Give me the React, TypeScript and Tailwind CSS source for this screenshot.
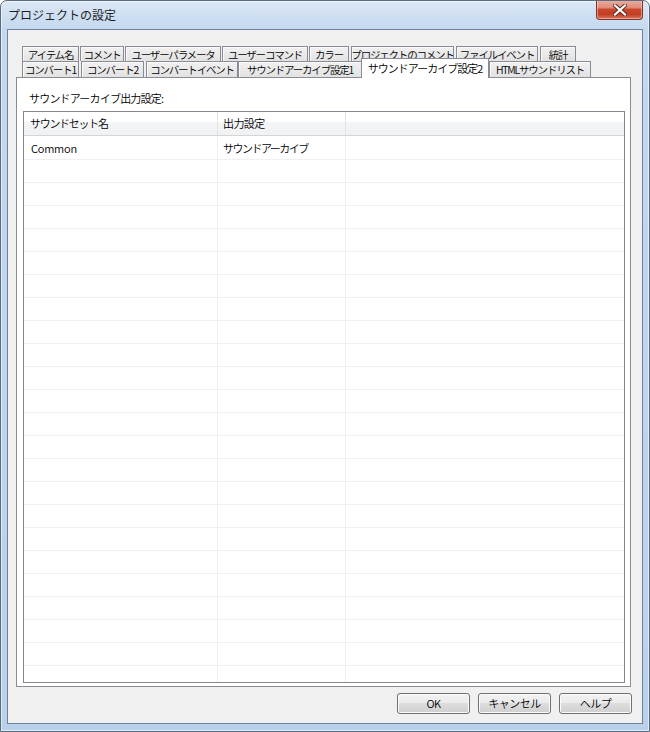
import React from 'react';

type Tab = { label: string; cls: string; selected?: boolean };

const row1: Tab[] = [
  { label: 'アイテム名', cls: 'w-[57px]' },
  { label: 'コメント', cls: 'ml-[1px] w-[44px]' },
  { label: 'ユーザーパラメータ', cls: 'ml-[1px] w-[96px]' },
  { label: 'ユーザーコマンド', cls: 'ml-[1px] w-[86px]' },
  { label: 'カラー', cls: 'ml-[1px] w-[40px]' },
  { label: 'プロジェクトのコメント', cls: 'ml-[2px] w-[103px]' },
  { label: 'ファイルイベント', cls: 'ml-[2px] w-[82px]' },
  { label: '統計', cls: 'ml-[2px] w-[36px]' },
];

const row2: Tab[] = [
  { label: 'コンバート1', cls: 'w-[57px]' },
  { label: 'コンバート2', cls: 'ml-[2px] w-[63px]' },
  { label: 'コンバートイベント', cls: 'ml-[2px] w-[92px]' },
  { label: 'サウンドアーカイブ設定1', cls: 'w-[124px]' },
  { label: 'サウンドアーカイブ設定2', cls: 'ml-[-1px] w-[128px]', selected: true },
  { label: 'HTMLサウンドリスト', cls: 'w-[102px]' },
];

function TabItem({ t }: { t: Tab }) {
  if (t.selected) {
    return (
      <div
        className={`relative z-10 shrink-0 self-end -mb-px h-[20px] ${t.cls} flex items-center justify-center border border-b-0 border-[#898c95] bg-white text-[11px] tracking-[-1px] text-black whitespace-nowrap`}
      >
        {t.label}
      </div>
    );
  }
  return (
    <div
      className={`shrink-0 h-full ${t.cls} flex items-center justify-center pt-[1px] border border-b-0 border-[#898c95] bg-[linear-gradient(#f1f1f1,#e2e2e2)] shadow-[inset_1px_1px_0_#fafafa] text-[10.5px] tracking-[-1.2px] text-black whitespace-nowrap`}
    >
      {t.label}
    </div>
  );
}

function Btn({ label }: { label: string }) {
  return (
    <div className="w-[73px] h-[21px] rounded-[3px] border border-[#707070] bg-[linear-gradient(#f2f2f2,#ebebeb_45%,#dddddd_50%,#cfcfcf)] shadow-[inset_0_0_0_1px_#fbfbfb] flex items-center justify-center text-[11px] tracking-[-0.5px] text-black">
      {label}
    </div>
  );
}

export default function App() {
  const rows = Array.from({ length: 24 }, (_, i) => i);
  return (
    <div className="font-['Noto_Sans_CJK_JP',sans-serif] font-[350] relative w-[650px] h-[732px] border border-[#5a6b80] rounded-t-[7px] overflow-hidden bg-[linear-gradient(180deg,#dbe7f5_0px,#c4d8ef_28px,#bad1ec_100%)] shadow-[inset_0_0_0_1px_rgba(255,255,255,0.55)] flex flex-col">
      {/* Title bar */}
      <div className="h-[28px] shrink-0 flex items-center pl-[7px] text-[12px] font-normal text-[#1e1e1e]">
        プロジェクトの設定
      </div>
      {/* Close button */}
      <div className="absolute right-[6px] top-[-1px] w-[47px] h-[20px] rounded-b-[4px] border border-t-0 border-[#7d3328] bg-[linear-gradient(#eab0a2,#e08b78_40%,#c9472e_50%,#c23d22_75%,#d7765c)] shadow-[inset_0_0_0_1px_rgba(255,220,210,0.5)] flex items-center justify-center">
        <svg width="14" height="12" viewBox="0 0 14 12">
          <path d="M2 1.5 L12 10.5 M12 1.5 L2 10.5" stroke="#5a2a22" strokeWidth="4" strokeLinecap="square" />
          <path d="M2 1.5 L12 10.5 M12 1.5 L2 10.5" stroke="#ffffff" strokeWidth="2.2" strokeLinecap="square" />
        </svg>
      </div>

      {/* Client area */}
      <div className="mx-[6px] mb-[7px] flex-1 border border-[#6f8299] bg-[#f0f0f0] flex flex-col">
        {/* Tabs */}
        <div className="mt-[16px] h-[15px] flex pl-[14px]">
          {row1.map((t) => (
            <TabItem key={t.label} t={t} />
          ))}
        </div>
        <div className="h-[16px] flex items-end pl-[14px]">
          {row2.map((t) => (
            <TabItem key={t.label} t={t} />
          ))}
        </div>

        {/* Tab page */}
        <div className="ml-[8px] w-[615px] h-[610px] border border-[#898c95] bg-white flex flex-col">
          <div className="mt-[13px] ml-[12px] h-[14px] flex items-center text-[11px] tracking-[-0.8px] text-black">
            サウンドアーカイブ出力設定:
          </div>
          <div className="mt-[6px] ml-[6px] w-[602px] h-[572px] border border-[#828790] bg-white overflow-hidden flex flex-col">
            {/* Header */}
            <div className="h-[24px] shrink-0 flex border-b border-[#d5d5d5] bg-[linear-gradient(#ffffff_0%,#ffffff_42%,#f3f4f6_46%,#f1f2f4_100%)] text-[11px] tracking-[-1.3px] text-black">
              <div className="w-[194px] shrink-0 pl-[6px] flex items-center border-r border-[#e2e3e5]">
                サウンドセット名
              </div>
              <div className="w-[128px] shrink-0 pl-[5px] flex items-center border-r border-[#e2e3e5] tracking-[-0.6px]">
                出力設定
              </div>
              <div className="flex-1" />
            </div>
            {/* Rows */}
            <div className="pt-[1px] flex flex-col">
              {rows.map((i) => (
                <div key={i} className="h-[23px] shrink-0 flex border-b border-[#f0f0f0] text-[11px] text-black">
                  <div className="w-[194px] shrink-0 pl-[7px] flex items-center border-r border-[#f0f0f0] tracking-[-0.2px]">
                    {i === 0 ? 'Common' : ''}
                  </div>
                  <div className="w-[128px] shrink-0 pl-[5px] flex items-center border-r border-[#f0f0f0] tracking-[-1.5px]">
                    {i === 0 ? 'サウンドアーカイブ' : ''}
                  </div>
                  <div className="flex-1" />
                </div>
              ))}
            </div>
          </div>
        </div>

        {/* Buttons */}
        <div className="mt-[6px] pr-[10px] flex justify-end gap-[8px]">
          <Btn label="OK" />
          <Btn label="キャンセル" />
          <Btn label="ヘルプ" />
        </div>
      </div>
    </div>
  );
}
